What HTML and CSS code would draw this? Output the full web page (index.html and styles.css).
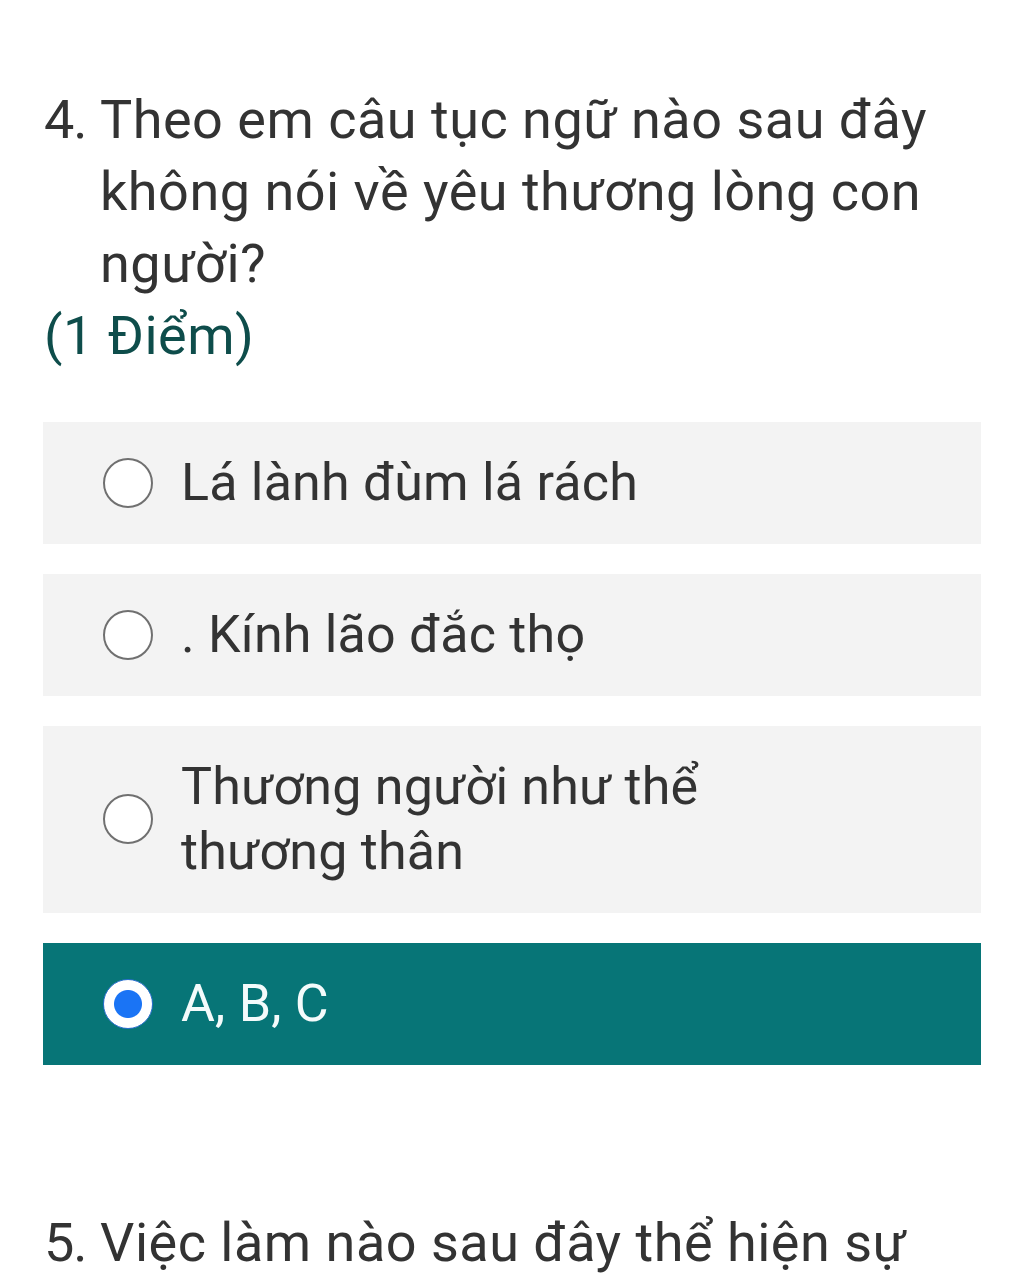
FILE: index.html
```html
<!DOCTYPE html>
<html lang="vi">
<head>
<meta charset="utf-8">
<link rel="stylesheet" href="styles.css">
</head>
<body>
<div class="page">
  <div class="question">
    <div class="q-title">
      <span class="q-num">4.</span>
      <span class="q-text">Theo em câu tục ngữ nào sau đây không nói về yêu thương lòng con người?</span>
    </div>
    <div class="q-points">(1 Điểm)</div>
    <div class="options">
      <div class="option">
        <span class="radio"></span>
        <span class="opt-text">Lá lành đùm lá rách</span>
      </div>
      <div class="option">
        <span class="radio"></span>
        <span class="opt-text">. Kính lão đắc thọ</span>
      </div>
      <div class="option">
        <span class="radio"></span>
        <span class="opt-text">Thương người như thể thương thân</span>
      </div>
      <div class="option selected">
        <span class="radio"></span>
        <span class="opt-text">A, B, C</span>
      </div>
    </div>
  </div>
  <div class="question next">
    <div class="q-title">
      <span class="q-num">5.</span>
      <span class="q-text">Việc làm nào sau đây thể hiện sự</span>
    </div>
  </div>
</div>
</body>
</html>
```

FILE: styles.css
```css
html, body {
  margin: 0;
  padding: 0;
  background: #ffffff;
}
body {
  font-family: Roboto, "Noto Sans", Arial, sans-serif;
  color: #333333;
}
.page {
  padding: 84px 43px 0 43px;
}
.q-title {
  display: flex;
  font-size: 54px;
  line-height: 72px;
  letter-spacing: 0.5px;
  color: #333333;
}
.q-num {
  flex: 0 0 auto;
  width: 56px;
  padding-left: 1px;
  letter-spacing: -1px;
}
.q-text {
  flex: 1 1 auto;
  max-width: 860px;
}
.q-points {
  font-size: 54px;
  line-height: 72px;
  letter-spacing: 0.5px;
  color: #0e4d4b;
  padding-left: 1px;
}
.options {
  margin-top: 50px;
  display: flex;
  flex-direction: column;
  gap: 30px;
}
.option {
  display: flex;
  align-items: center;
  background: #f3f3f3;
  padding: 28px 0 29px 60px;
  font-size: 52px;
  line-height: 65px;
  letter-spacing: 0.2px;
}
.radio {
  flex: 0 0 auto;
  width: 46px;
  height: 46px;
  border: 2px solid #707070;
  border-radius: 50%;
  background: #ffffff;
  margin-right: 28px;
  box-sizing: content-box;
}
.opt-text {
  max-width: 580px;
}
.option.selected {
  background: #077577;
  color: #f4fbfb;
}
.option.selected .radio {
  width: 48px;
  height: 48px;
  border: 1px solid #2b6fd0;
  background: radial-gradient(circle, #1a74f5 0 13.5px, #ffffff 14.5px);
}
.next {
  margin-top: 142px;
}
```
